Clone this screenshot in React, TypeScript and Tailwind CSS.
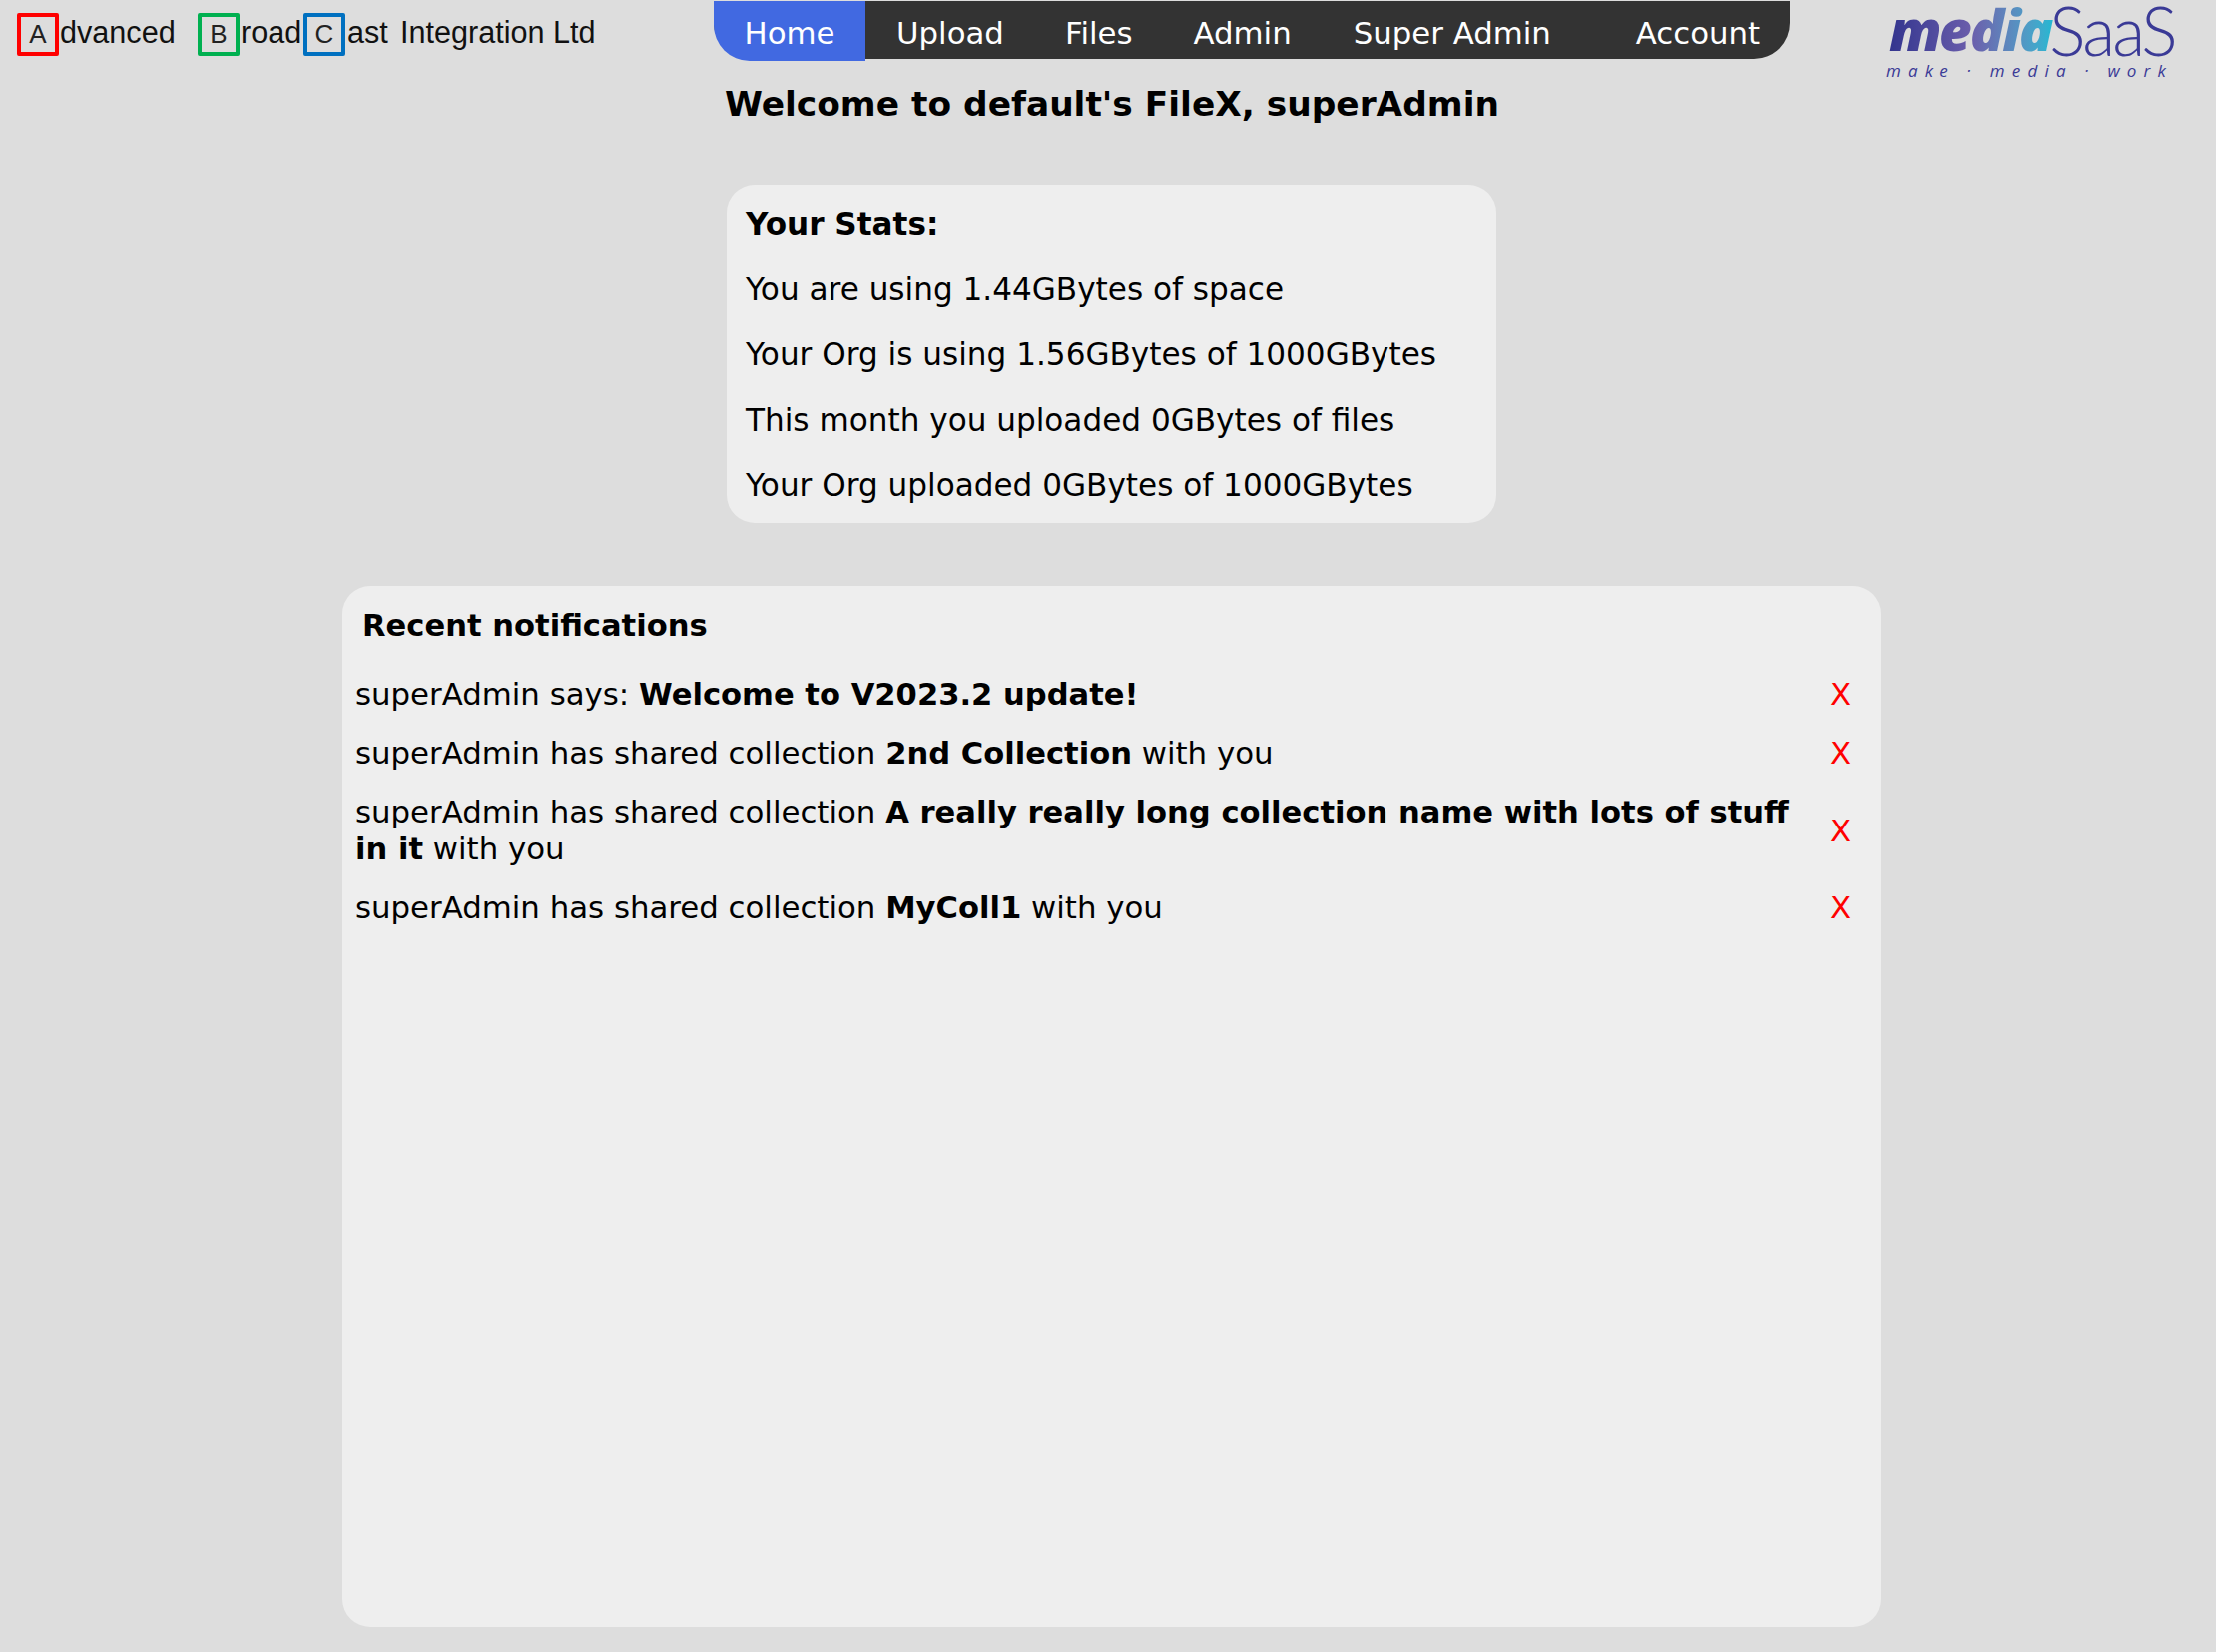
import React from 'react'

const verdana = "font-['DejaVu_Sans',sans-serif]"

const BrandBox = ({ letter, color }: { letter: string; color: string }) => (
  <span className={`flex h-[43px] w-[42px] shrink-0 items-center justify-center rounded-[2px] border-[4px] text-[26px] text-[#222] ${color}`}>
    {letter}
  </span>
)

const Brand = () => (
  <div className="flex h-[68px] w-[715px] shrink-0 items-center pl-[17px] font-['Liberation_Sans',sans-serif] text-[30.6px] leading-none text-[#111]">
    <BrandBox letter="A" color="border-[#ff0000]" />
    <span className="mb-[3px] ml-[1px] w-[138px]">dvanced</span>
    <BrandBox letter="B" color="border-[#00b050]" />
    <span className="mb-[3px] ml-[1px] w-[63px]">road</span>
    <BrandBox letter="C" color="border-[#0070c0]" />
    <span className="mb-[3px] ml-[2px] w-[53px]">ast</span>
    <span className="mb-[3px]">Integration Ltd</span>
  </div>
)

const Nav = () => (
  <nav className={`mt-[1px] flex h-[58px] w-[1078px] shrink-0 items-start rounded-bl-[36px] rounded-br-[36px] bg-[#333] text-[30.8px] leading-[64px] text-white ${verdana}`}>
    <a className="h-[60px] w-[152px] rounded-bl-[36px] bg-[#4169e1] text-center">Home</a>
    <a className="ml-[31px]">Upload</a>
    <a className="ml-[61px]">Files</a>
    <a className="ml-[61px]">Admin</a>
    <a className="ml-[62px]">Super Admin</a>
    <a className="ml-[85px]">Account</a>
  </nav>
)

const Logo = () => (
  <div className="ml-[99px] flex w-[290px] flex-col">
    <div className="flex h-[59px] items-end leading-[59px]">
      <span className="bg-linear-to-r from-[#33348e] via-[#6a5dab] to-[#1fb8d2] bg-clip-text pr-[2px] font-['Open_Sans',sans-serif] text-[57px] font-extrabold italic tracking-[-2px] text-transparent">media</span>
      <span className="ml-[-4px] font-['Lato',sans-serif] text-[68px] font-light tracking-[-3px] text-[#3a3a96]">SaaS</span>
    </div>
    <div className="ml-[-3px] whitespace-pre font-['Open_Sans',sans-serif] text-[17px] italic leading-[24px] tracking-[7.2px] text-[#3a3a96]">make · media · work</div>
  </div>
)

const Stat = ({ children, bold }: { children: React.ReactNode; bold?: boolean }) => (
  <p className={`h-[65.5px] leading-[65.5px] ${bold ? 'font-bold' : ''}`}>{children}</p>
)

const notifications = [
  { pre: 'superAdmin says: ', name: 'Welcome to V2023.2 update!', post: '' },
  { pre: 'superAdmin has shared collection ', name: '2nd Collection', post: ' with you' },
  { pre: 'superAdmin has shared collection ', name: 'A really really long collection name with lots of stuff in it', post: ' with you' },
  { pre: 'superAdmin has shared collection ', name: 'MyColl1', post: ' with you' },
]

export default function App() {
  return (
    <div className={`min-h-[1655px] bg-[#dddddd] text-black ${verdana}`}>
      <header className="flex items-start">
        <Brand />
        <Nav />
        <Logo />
      </header>

      <h1 className="mt-[-15px] pl-[8px] text-center text-[34.4px] font-bold leading-[72px]">Welcome to default's FileX, superAdmin</h1>

      <section className="ml-[728px] mt-[45px] h-[339px] w-[771px] rounded-[28px] bg-[#eeeeee] px-[19px] pt-[7px] text-[31.1px]">
        <Stat bold>Your Stats:</Stat>
        <Stat>You are using 1.44GBytes of space</Stat>
        <Stat>Your Org is using 1.56GBytes of 1000GBytes</Stat>
        <Stat>This month you uploaded 0GBytes of files</Stat>
        <Stat>Your Org uploaded 0GBytes of 1000GBytes</Stat>
      </section>

      <section className="ml-[343px] mt-[63px] h-[1043px] w-[1541px] rounded-[28px] bg-[#eeeeee] pl-[13px] pr-[14px] pt-[4px] text-[30.8px]">
        <h2 className="h-[72px] pl-[7px] text-[30.6px] font-bold leading-[72px]">Recent notifications</h2>
        <div className="mt-[14px] flex flex-col gap-[22px] leading-[37px]">
          {notifications.map((n) => (
            <div key={n.name} className="flex items-center justify-between">
              <p className="w-[1460px]">
                {n.pre}
                <b className="text-[30.6px]">{n.name}</b>
                {n.post}
              </p>
              <span className="mr-[16px] text-[#ff0000]">X</span>
            </div>
          ))}
        </div>
      </section>
    </div>
  )
}
